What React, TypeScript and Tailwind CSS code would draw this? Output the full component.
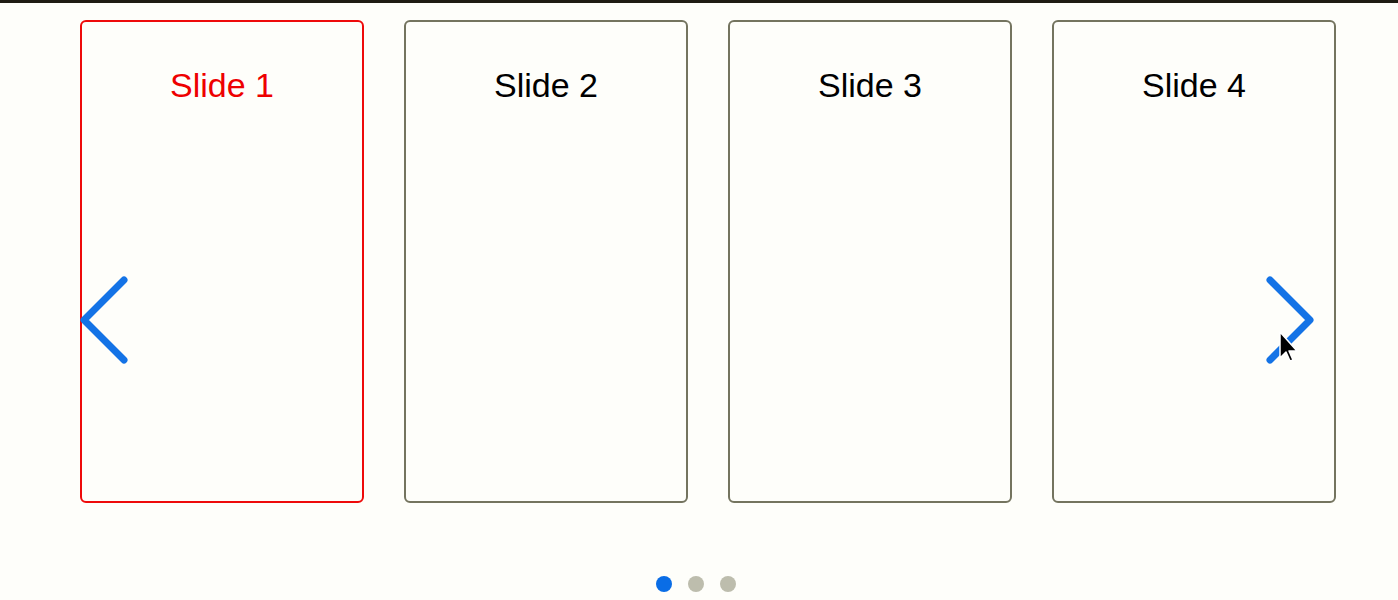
import React from "react";

const slides = [1, 2, 3, 4];

export default function App() {
  return (
    <div className="relative h-[600px] w-[1398px] overflow-hidden bg-[#fefefa]" style={{ fontFamily: '"Liberation Sans", Arial, sans-serif' }}>
      <div className="h-[3px] bg-[#1e1c12]" />
      <div className="flex gap-[40px] pl-[80px] pt-[17px]">
        {slides.map((n) => (
          <div
            key={n}
            className={
              n === 1
                ? "h-[483px] w-[284px] rounded-[6px] border-2 border-[#ee0a0a] pt-[46px] text-center text-[34px] leading-[34px] text-[#ee0000]"
                : "h-[483px] w-[284px] rounded-[6px] border-2 border-[#74745f] pt-[46px] text-center text-[34px] leading-[34px] text-black"
            }
          >
            Slide {n}
          </div>
        ))}
      </div>
      <div className="mt-[73px] flex gap-[16px] pl-[656px]">
        <div className="h-[16px] w-[16px] rounded-full bg-[#0a6de6]" />
        <div className="h-[16px] w-[16px] rounded-full bg-[#bdbdad]" />
        <div className="h-[16px] w-[16px] rounded-full bg-[#bdbdad]" />
      </div>

      <svg className="absolute left-[76px] top-[272px]" width="56" height="96" viewBox="0 0 56 96">
        <polyline points="48,8 8,48 48,88" fill="none" stroke="#1473e6" strokeWidth="7" strokeLinecap="round" strokeLinejoin="round" />
      </svg>
      <svg className="absolute left-[1262px] top-[272px]" width="56" height="96" viewBox="0 0 56 96">
        <polyline points="8,8 48,48 8,88" fill="none" stroke="#1473e6" strokeWidth="7" strokeLinecap="round" strokeLinejoin="round" />
      </svg>
      <svg className="absolute left-[1278px] top-[330px]" width="20" height="40" viewBox="0 0 20 40">
        <path d="M2 2 L2 28 L8 22 L12 31 L15 30 L11 21 L19 21 Z" fill="#000" stroke="#fff" strokeWidth="1.5" strokeLinejoin="round" />
      </svg>
    </div>
  );
}
